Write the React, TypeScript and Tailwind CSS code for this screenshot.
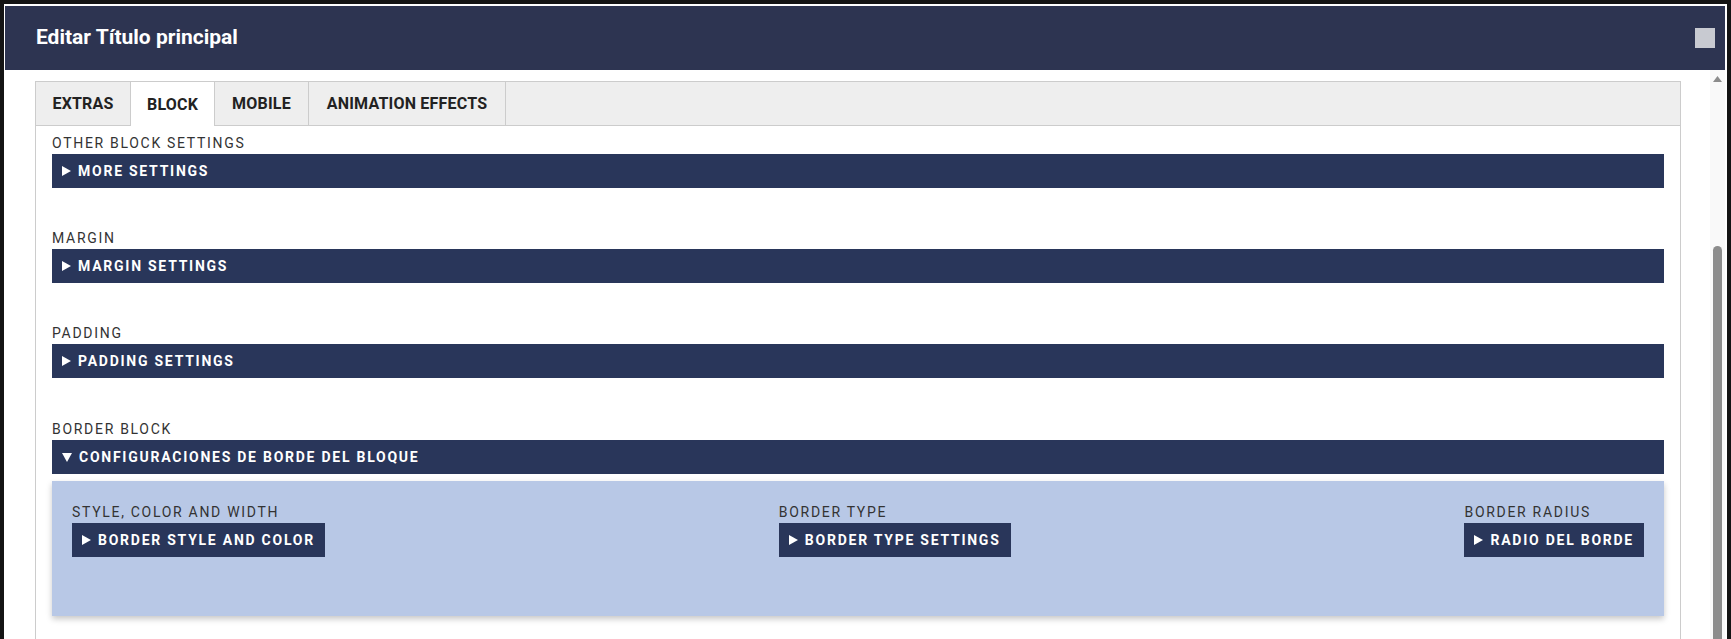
import React from 'react'

/**
 * Editar Título principal — block settings modal
 */

function Arrow({ open = false }: { open?: boolean }) {
  return open ? (
    <svg width="10" height="9" viewBox="0 0 10 9" className="shrink-0 fill-white">
      <polygon points="0,0 10,0 5,9" />
    </svg>
  ) : (
    <svg width="9" height="10" viewBox="0 0 9 10" className="shrink-0 fill-white">
      <polygon points="0,0 9,5 0,10" />
    </svg>
  )
}

function Label({ children }: { children: React.ReactNode }) {
  return (
    <div className="mb-px h-5 text-[14px] leading-5 tracking-[1.7px] whitespace-nowrap text-[#333]">
      {children}
    </div>
  )
}

function Bar({ children, open = false }: { children: React.ReactNode; open?: boolean }) {
  return (
    <div className="flex h-[34px] items-center gap-[7px] bg-[#29365a] pl-[10px] text-[14px] font-bold tracking-[1.75px] text-white">
      <Arrow open={open} />
      <span>{children}</span>
    </div>
  )
}

function SmallButton({ children }: { children: React.ReactNode }) {
  return (
    <div className="flex h-[34px] items-center gap-[7px] bg-[#29365a] pr-[10px] pl-[10px] text-[14px] font-bold tracking-[1.75px] whitespace-nowrap text-white">
      <Arrow />
      <span>{children}</span>
    </div>
  )
}

const tabs = [
  { name: 'EXTRAS', w: 'w-[95px]' },
  { name: 'BLOCK', w: 'w-[84px]', active: true },
  { name: 'MOBILE', w: 'w-[94px]' },
  { name: 'ANIMATION EFFECTS', w: 'w-[197px]' },
]

export default function App() {
  return (
    <div className="h-[639px] w-full overflow-hidden bg-[#141414] px-1 pt-1 font-['Roboto',sans-serif]">
      <div className="flex h-full flex-col bg-white">
        {/* Header */}
        <div className="mt-[2px] mr-[2px] ml-px flex h-16 shrink-0 items-center justify-between bg-[#2d3451] pr-[10px] pl-[31px]">
          <h1 className="text-[21px] font-bold text-white">Editar Título principal</h1>
          <div className="h-5 w-5 bg-[#c8cad1]" />
        </div>

        {/* Body */}
        <div className="mr-[2px] flex min-h-0 flex-1">
          <div className="min-w-0 flex-1 pt-[11px] pr-[29px] pl-[31px]">
            <div className="h-full border border-b-0 border-[#ccc]">
              {/* Tabs */}
              <div className="flex h-[44px] border-b border-[#ccc] bg-[#eee]">
                {tabs.map((t) => (
                  <div
                    key={t.name}
                    className={
                      t.active
                        ? `${t.w} -mb-px flex h-[44px] items-center justify-center border-r border-[#ccc] bg-white pt-px text-[16px] font-bold tracking-[0.2px] text-[#222]`
                        : `${t.w} flex items-center justify-center border-r border-[#ccc] pt-px text-[16px] font-bold tracking-[0.2px] text-[#222]`
                    }
                  >
                    {t.name}
                  </div>
                ))}
              </div>

              {/* Settings */}
              <div className="flex flex-col gap-10 px-4 pt-[7px]">
                <div>
                  <Label>OTHER BLOCK SETTINGS</Label>
                  <Bar>MORE SETTINGS</Bar>
                </div>
                <div>
                  <Label>MARGIN</Label>
                  <Bar>MARGIN SETTINGS</Bar>
                </div>
                <div>
                  <Label>PADDING</Label>
                  <Bar>PADDING SETTINGS</Bar>
                </div>
                <div className="mt-px">
                  <Label>BORDER BLOCK</Label>
                  <Bar open>CONFIGURACIONES DE BORDE DEL BLOQUE</Bar>
                  <div className="mt-[7px] flex h-[135px] items-start justify-between bg-[#b8c8e6] px-5 pt-[21px] shadow-[0_3px_6px_rgba(0,0,0,0.22)]">
                    <div>
                      <Label>STYLE, COLOR AND WIDTH</Label>
                      <SmallButton>BORDER STYLE AND COLOR</SmallButton>
                    </div>
                    <div>
                      <Label>BORDER TYPE</Label>
                      <SmallButton>BORDER TYPE SETTINGS</SmallButton>
                    </div>
                    <div>
                      <Label>BORDER RADIUS</Label>
                      <SmallButton>RADIO DEL BORDE</SmallButton>
                    </div>
                  </div>
                </div>
              </div>
            </div>
          </div>

          {/* Scrollbar */}
          <div className="flex w-[15px] shrink-0 flex-col items-center bg-[#f9f9f9] pt-[6px]">
            <svg width="9" height="6" viewBox="0 0 9 6" className="fill-[#8c8c8c]">
              <polygon points="4.5,0 9,6 0,6" />
            </svg>
            <div className="mt-[164px] w-[9px] flex-1 rounded-t-full bg-[#8c8c8c]" />
          </div>
        </div>
      </div>
    </div>
  )
}
